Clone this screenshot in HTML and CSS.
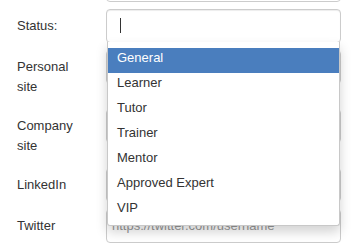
FILE: index.html
```html
<!DOCTYPE html>
<html>
<head>
<meta charset="utf-8">
<link rel="stylesheet" href="styles.css">
</head>
<body>
<div class="form">
  <div class="group">
    <div class="label"></div>
    <div class="field"><div class="input"></div></div>
  </div>
  <div class="group">
    <label class="label">Status:</label>
    <div class="field">
      <div class="input status"><span class="cursor"></span></div>
      <ul class="dropdown">
        <li class="option active">General</li>
        <li class="option">Learner</li>
        <li class="option">Tutor</li>
        <li class="option">Trainer</li>
        <li class="option">Mentor</li>
        <li class="option">Approved Expert</li>
        <li class="option">VIP</li>
      </ul>
    </div>
  </div>
  <div class="group">
    <label class="label">Personal site</label>
    <div class="field"><div class="input"></div></div>
  </div>
  <div class="group">
    <label class="label">Company site</label>
    <div class="field"><div class="input"></div></div>
  </div>
  <div class="group">
    <label class="label">LinkedIn</label>
    <div class="field"><div class="input"></div></div>
  </div>
  <div class="group">
    <label class="label">Twitter</label>
    <div class="field"><div class="input placeholder">https://twitter.com/username</div></div>
  </div>
</div>
</body>
</html>
```
FILE: styles.css
```css
html, body {
  margin: 0;
  padding: 0;
  background: #fff;
  overflow: hidden;
}
body {
  font-family: "Liberation Sans", Arial, sans-serif;
  font-size: 13px;
  line-height: 20px;
  color: #333;
}
.form {
  margin-top: -32px;
  padding-left: 17px;
}
.group {
  display: grid;
  grid-template-columns: 89px 235px;
  align-items: start;
  margin-bottom: 7px;
}
.label {
  padding: 7px 15px 5px 0;
  line-height: 20px;
}
.field {
  position: relative;
}
.input {
  box-sizing: border-box;
  height: 34px;
  border: 1px solid #ccc;
  border-radius: 4px;
  box-shadow: inset 0 1px 1px rgba(0,0,0,.075);
  padding: 6px 5px;
  line-height: 20px;
  background: #fff;
}
.placeholder {
  color: #999;
  white-space: nowrap;
  overflow: hidden;
}
.status {
  padding-left: 13px;
}
.cursor {
  display: block;
  width: 1px;
  height: 15px;
  margin-top: 2px;
  background: #333;
}
.dropdown {
  position: absolute;
  top: 33px;
  left: 1px;
  width: 233px;
  box-sizing: border-box;
  margin: 0;
  padding: 6px 0 2px;
  list-style: none;
  background: #fff;
  border: 1px solid #c8c8c8;
  border-top: none;
  border-radius: 0 0 3px 3px;
  box-shadow: 0 6px 12px rgba(0,0,0,.175);
  z-index: 10;
}
.option {
  height: 25px;
  box-sizing: border-box;
  padding: 0 9px;
  line-height: 20px;
  color: #333;
}
.option.active {
  background: #4a7ebe;
  color: #fff;
}
```
